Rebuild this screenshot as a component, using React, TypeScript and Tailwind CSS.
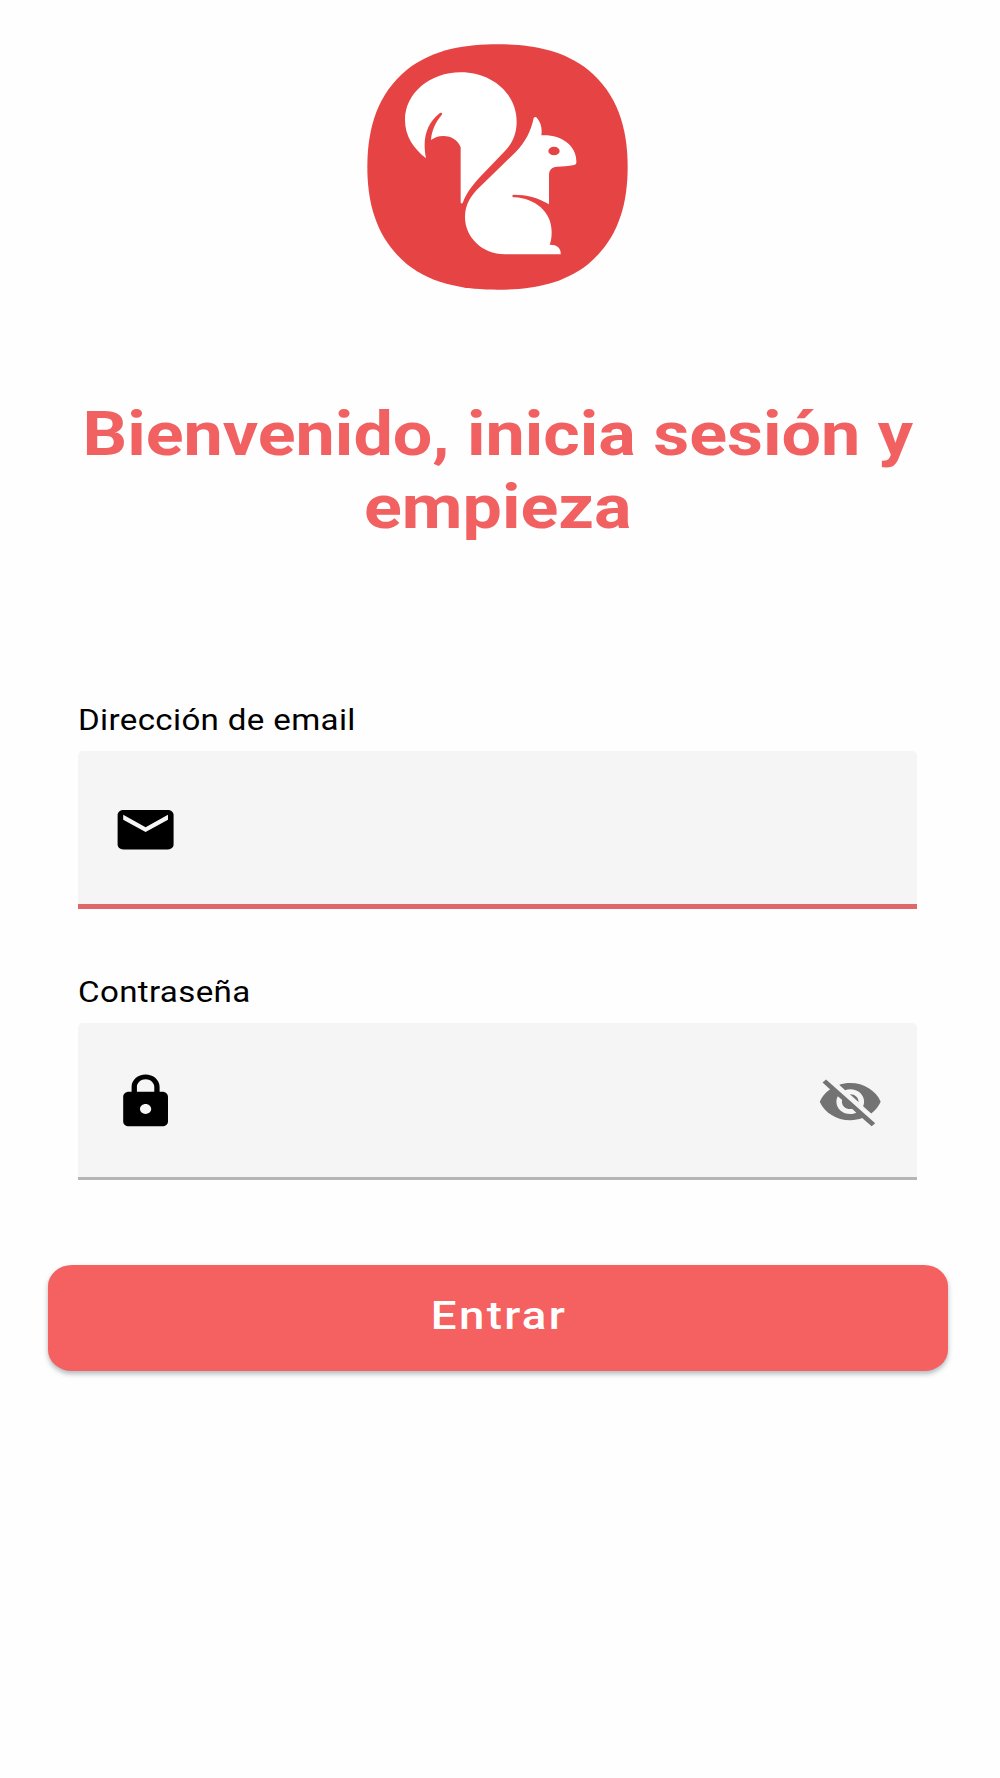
import type { ReactNode } from "react";
import { MdEmail, MdLock, MdVisibilityOff } from "react-icons/md";

function SquirrelLogo() {
  return (
    <svg viewBox="0 0 870 840" className="w-[290px] h-[280px]" role="img">
      <path
        fill="#e64444"
        d="M428 43C520 43 620 56 700 120C785 190 818 290 818 411C818 532 785 630 700 702C620 766 520 779 428 779C336 779 235 766 155 702C70 630 37 532 37 411C37 290 70 190 155 120C235 56 336 43 428 43Z"
      />
      {/* tail */}
      <path
        fill="#fff"
        d="M213 385C175 355 150 318 150 270C150 190 225 127 317 127C410 127 485 190 485 275C485 308 474 337 452 361L380 436C350 467 333 492 324 517Q320 524 317 517V352C310 332 290 318 265 318C250 318 238 323 228 330C230 300 242 277 260 255C264 249 258 246 252 251C216 280 201 325 213 385Z"
      />
      {/* body */}
      <path
        fill="#fff"
        d="M536 264Q541 258 546 264C558 278 562 296 559 316C615 312 667 345 664 398Q664 404 657 405C640 409 622 409 606 410C590 411 582 420 582 436V523C548 502 515 494 477 494C470 495 470 502 478 502C540 505 590 545 590 605C590 622 588 633 584 644C605 643 619 655 617 673H450C380 673 330 620 330 562C330 522 347 497 375 470L480 368C512 337 529 300 536 264Z"
      />
      <ellipse cx="597" cy="363" rx="17" ry="13" fill="#e64444" />
    </svg>
  );
}

type FieldProps = {
  label: string;
  icon: ReactNode;
  action?: ReactNode;
  type: string;
  border: string;
};

function Field({ label, icon, action, type, border }: FieldProps) {
  return (
    <label className="block h-[209px]">
      <span className="block w-fit origin-left scale-x-[1.142] text-[29px] leading-[28px] tracking-[0.3px] text-black">
        {label}
      </span>
      <span
        className={`mt-[17px] flex items-center rounded-t-[5px] bg-[#f5f5f5] pt-[4px] pr-[34px] pl-[33.5px] ${border}`}
      >
        {icon}
        <input type={type} className="h-full min-w-0 flex-1 bg-transparent px-6 text-3xl outline-none" />
        {action}
      </span>
    </label>
  );
}

export default function App() {
  return (
    <main className="flex min-h-[1778px] w-[1000px] flex-col bg-[#fefefe] pt-[30px] font-['Roboto',sans-serif]">
      <div className="pl-[355px]">
        <SquirrelLogo />
      </div>

      <h1 className="mt-[88px] flex w-[996px] justify-center text-center text-[61px] leading-[72.5px] font-bold text-[#f26161]">
        <span className="block w-fit scale-x-[1.148]">
          Bienvenido, inicia sesión y<br />
          empieza
        </span>
      </h1>

      <form className="mt-[163px]" onSubmit={(e) => e.preventDefault()}>
        <div className="flex flex-col gap-[63px] pr-[83px] pl-[78px]">
          <Field
            label="Dirección de email"
            type="email"
            border="h-[158px] border-b-[5px] border-[#de6868]"
            icon={<MdEmail preserveAspectRatio="none" className="h-[59.3px] w-[67.2px] text-black" />}
          />
          <Field
            label="Contraseña"
            type="password"
            border="h-[157px] border-b-[3px] border-[#b5b5b5]"
            icon={<MdLock preserveAspectRatio="none" className="h-[59.3px] w-[67.2px] text-black" />}
            action={
              <MdVisibilityOff preserveAspectRatio="none" className="h-[59.3px] w-[66.5px] text-[#737373]" />
            }
          />
        </div>

        <button
          type="submit"
          className="mt-[78px] ml-[47.5px] flex h-[106px] w-[900px] items-center justify-center rounded-[24px/21px] bg-[#f56060] pb-[4px] pl-[3px] shadow-[0_3px_5px_rgba(40,60,70,0.35)]"
        >
          <span className="scale-x-[1.155] text-[39.5px] leading-none font-medium tracking-[2px] text-white">
            Entrar
          </span>
        </button>
      </form>
    </main>
  );
}
